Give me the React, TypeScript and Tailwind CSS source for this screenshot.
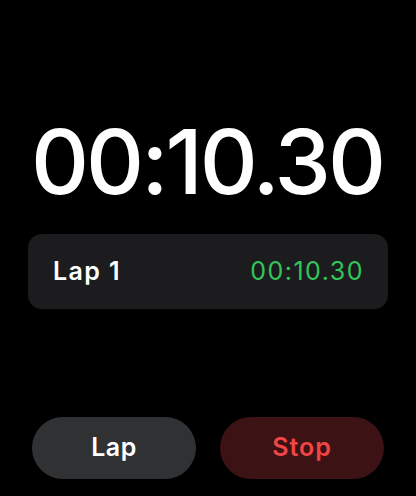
export default function App() {
  return (
    <div
      className="w-[416px] h-[496px] bg-black flex flex-col text-white"
      style={{ fontFamily: "Inter, 'Noto Sans', sans-serif" }}
    >
      <div className="pt-[117px] flex justify-center">
        <div className="text-[90px] leading-[90px] font-medium tracking-[-3px] pr-[2px]">00:10.30</div>
      </div>
      <div className="mx-[28px] mt-[27px] h-[75px] rounded-[14px] bg-[#1c1c1e] flex items-center justify-between pl-[25px] pr-[24px]">
        <span className="text-[25px] font-semibold tracking-[1.4px]">Lap 1</span>
        <span className="text-[25px] text-[#32c55a] tracking-[1.5px]">00:10.30</span>
      </div>
      <div className="mt-auto mb-[17px] flex gap-[24px] px-[32px]">
        <button className="w-[164px] h-[62px] rounded-full bg-[#2f3133] text-white text-[25px] font-semibold tracking-[0.5px]">Lap</button>
        <button className="w-[164px] h-[62px] rounded-full bg-[#3d1214] text-[#ef4545] text-[25px] font-semibold tracking-[1px]">Stop</button>
      </div>
    </div>
  );
}
